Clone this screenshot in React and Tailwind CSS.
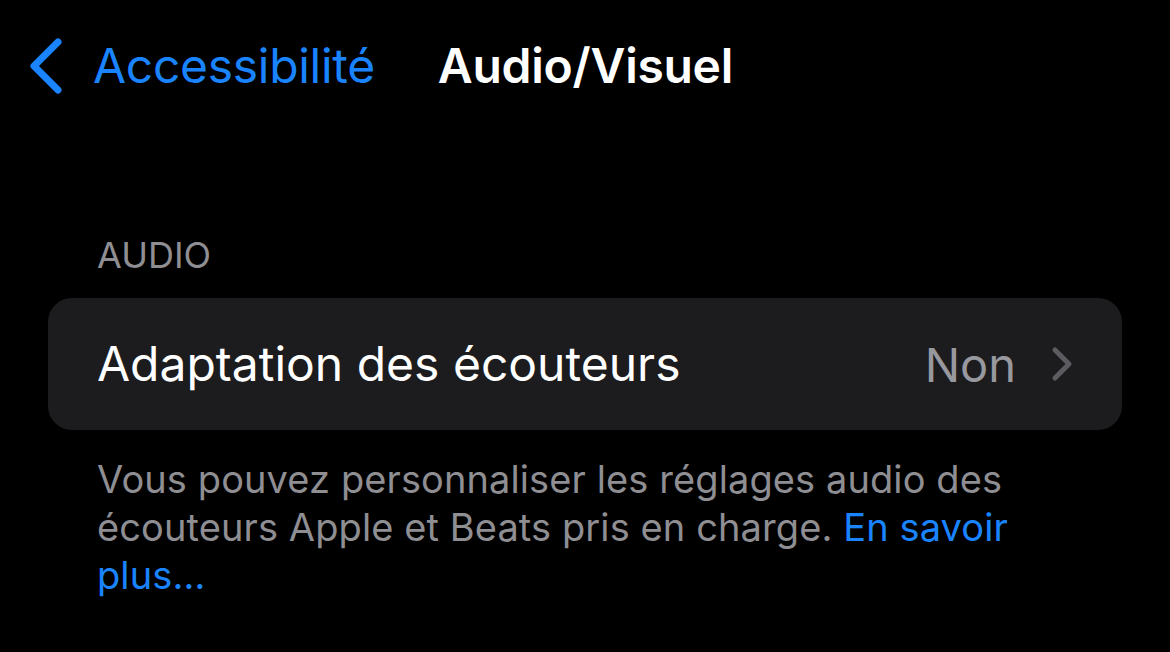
import React from 'react';

export default function App() {
  return (
    <div
      className="w-[1170px] h-[652px] bg-black overflow-hidden"
      style={{ fontFamily: 'Inter, "Noto Sans", sans-serif' }}
    >
      {/* Nav bar */}
      <div className="flex items-center h-[134px] pl-[26px] pb-[2px]">
        <svg width="40" height="58" viewBox="0 0 40 58" fill="none" className="shrink-0">
          <path d="M32 5 L8 29 L32 53" stroke="#1a84ff" strokeWidth="7" strokeLinecap="round" strokeLinejoin="round" />
        </svg>
        <span className="ml-[27px] text-[48px] leading-none tracking-[-0.3px] text-[#1a84ff]">Accessibilité</span>
        <span className="ml-[63px] text-[48px] leading-none font-semibold tracking-[-0.3px] text-white">Audio/Visuel</span>
      </div>

      {/* Section */}
      <div className="px-[48px] pt-[103px]">
        <div className="pl-[49px] text-[36px] leading-none text-[#8e8e93]">AUDIO</div>

        <div className="mt-[25px] h-[132px] rounded-[24px] bg-[#1c1c1e] flex items-center pl-[49px] pr-[48px]">
          <span className="text-[48px] leading-none text-white">Adaptation des écouteurs</span>
          <span className="ml-auto text-[47px] leading-none text-[#98989f]">Non</span>
          <svg width="24" height="38" viewBox="0 0 24 38" fill="none" className="ml-[34px] shrink-0">
            <path d="M5 5 L19 19 L5 33" stroke="#5b5b60" strokeWidth="5" strokeLinecap="round" strokeLinejoin="round" />
          </svg>
        </div>

        <p className="mt-[25px] pl-[49px] pr-[60px] text-[38px] leading-[48px] text-[#8e8e93] tracking-[0.1px]">
          Vous pouvez personnaliser les réglages audio des écouteurs Apple et Beats pris en charge.{' '}
          <span className="text-[#1a84ff]">En savoir plus…</span>
        </p>
      </div>
    </div>
  );
}
